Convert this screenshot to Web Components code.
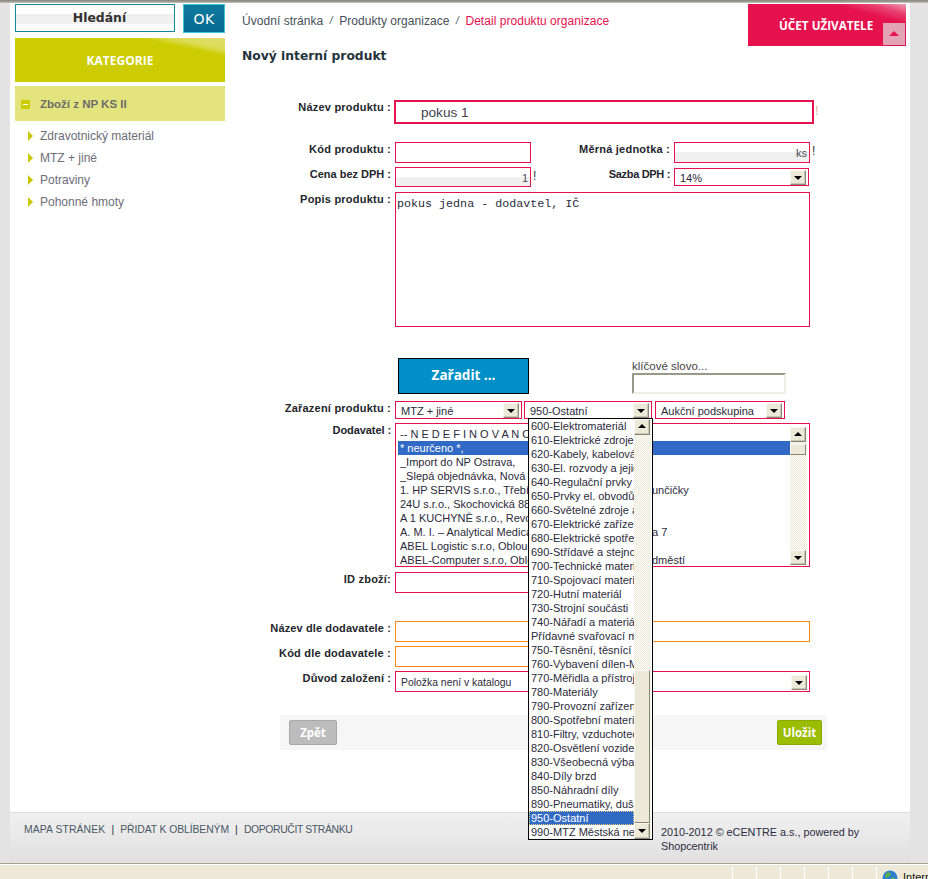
<!DOCTYPE html>
<html lang="cs">
<head>
<meta charset="utf-8">
<title>Nový interní produkt</title>
<style>
    html, body { margin: 0; height: 879px; overflow: hidden; background: #e3e3e3; }
    body { font-family: "Liberation Sans", Arial, sans-serif; }
</style>
</head>
<body>
<app-shell>
    <side-bar slot="side"></side-bar>
    <top-bar slot="main"></top-bar>
    <product-form slot="main"></product-form>
</app-shell>

<script>
// shared look of the old XP scrollbar buttons
const arrowButton = (dir) => `<span class="btn ${dir}"></span>`;
const buttonCss = `
    .btn {
        display: block; box-sizing: border-box; width: 16px; height: 15px; position: relative;
        background: #ece9d8;
        border: 1px solid; border-color: #f7f6ef #8a8778 #8a8778 #f7f6ef;
        box-shadow: inset -1px -1px 0 #c9c6b6;
    }
    .btn::after {
        content: ""; position: absolute; left: 3px; width: 0; height: 0;
        border-left: 4px solid transparent; border-right: 4px solid transparent;
    }
    .btn.down::after { top: 5px; border-top: 4px solid #000; }
    .btn.up::after { top: 4px; border-bottom: 4px solid #000; }
`;
const scrollCss = `
    .bar {
        display: flex; flex-direction: column; width: 17px;
        background: repeating-conic-gradient(#ece9d8 0 25%, #fdfdfb 0 50%) 0 0 / 2px 2px;
    }
    .thumb { box-sizing: border-box; background: #ece9d8; width: 16px; border: 1px solid; border-color: #f7f6ef #8a8778 #8a8778 #f7f6ef; }
    .fill { flex: 1; }
`;

class AppShell extends HTMLElement {
    constructor() {
        super();
        this.attachShadow({ mode: "open" });
        this.shadowRoot.innerHTML = `
            <style>
                :host { display: flex; flex-direction: column; height: 879px; }
                #top { height: 3px; background: linear-gradient(#85857c, #a5a59c 70%, #d8d8d0); }
                #page {
                    display: grid; grid-template-columns: 210px 1fr; column-gap: 17px;
                    height: 809px; box-sizing: border-box;
                    margin: 0 18px 0 10px; padding-left: 5px; background: #fff;
                }
                #main { display: flex; flex-direction: column; min-width: 0; }
            </style>
            <div id="top"></div>
            <div id="page">
                <slot name="side"></slot>
                <div id="main"><slot name="main"></slot></div>
            </div>
            <page-footer></page-footer>
            <status-bar></status-bar>
        `;
    }
}

class SideBar extends HTMLElement {
    constructor() {
        super();
        this.attachShadow({ mode: "open" });
        let items = ["Zdravotnický materiál", "MTZ + jiné", "Potraviny", "Pohonné hmoty"];
        this.shadowRoot.innerHTML = `
            <style>
                :host { display: block; padding-top: 1px; font-family: "Liberation Sans", sans-serif; }
                #search { display: flex; justify-content: space-between; height: 29px; }
                #query {
                    box-sizing: border-box; width: 160px; height: 28px; border: 1px solid #13879f; padding-left: 9px;
                    display: flex; align-items: center; justify-content: center;
                    font: bold 12.4px/1 "DejaVu Sans", sans-serif; color: #33302f;
                    background: linear-gradient(#fff 9px, #f0f0f0 9px, #f0f0f0 19px, #fff 19px);
                }
                #ok {
                    box-sizing: border-box; width: 42px; height: 29px; border: 1px solid #3fc4d8;
                    display: flex; align-items: center; justify-content: center;
                    font: 14px/1 "DejaVu Sans", sans-serif; letter-spacing: .5px; color: #fff;
                    background: linear-gradient(#107a9e, #046a90);
                }
                #cat {
                    margin-top: 5px; height: 44px; padding-top: 2px; box-sizing: border-box; display: flex; align-items: center; justify-content: center;
                    font: bold 12px/1 "Open Sans", sans-serif; color: #fff;
                    background: linear-gradient(to bottom left, #dfdf70 0, #dcdc58 13%, #cccc00 21%);
                }
                #root {
                    margin-top: 4px; height: 35px; background: #e4e47e; display: flex; align-items: center;
                    font-size: 11.5px; font-weight: bold; color: #6c6c6c;
                }
                #minus {
                    width: 9px; height: 9px; margin: 1px 10px 0 6px; background: #cccc00; position: relative;
                }
                #minus::after { content: ""; position: absolute; left: 2px; right: 2px; top: 4px; height: 1px; background: #fff; }
                ul { list-style: none; margin: 4px 0 0; padding: 0; }
                li {
                    display: flex; align-items: center; height: 22px;
                    font-size: 12px; color: #6d6d78;
                }
                li::before {
                    content: ""; width: 0; height: 0; margin: 0 7px 0 13px;
                    border-left: 5px solid #c8c800; border-top: 5px solid transparent; border-bottom: 5px solid transparent;
                }
            </style>
            <div id="search"><div id="query">Hledání</div><div id="ok">OK</div></div>
            <div id="cat">KATEGORIE</div>
            <div id="root"><span id="minus"></span>Zboží z NP KS II</div>
            <ul>${items.map(i => `<li>${i}</li>`).join("")}</ul>
        `;
    }
}

class TopBar extends HTMLElement {
    constructor() {
        super();
        this.attachShadow({ mode: "open" });
        this.shadowRoot.innerHTML = `
            <style>
                :host { display: block; font-family: "Liberation Sans", sans-serif; }
                #row { display: flex; justify-content: space-between; height: 43px; padding-right: 4px; }
                #crumbs { display: flex; padding-top: 11px; font-size: 12px; line-height: 14px; color: #46505a; letter-spacing: .04px; }
                #crumbs i { width: 16px; text-align: center; font-size: 10px; }
                #crumbs b { font-weight: normal; color: #e5124e; }
                #account {
                    position: relative; box-sizing: border-box; width: 158px; height: 42px; margin-top: 1px;
                    padding: 14px 0 0 31px; font: bold 11.7px/14px "Open Sans", sans-serif; color: #fff;
                    background: linear-gradient(to bottom left, #f0a0b8 0, #e8406f 12%, #e5124e 24%);
                }
                #up { position: absolute; right: 1px; bottom: 1px; width: 22px; height: 22px; background: #e3a3b7; }
                #up::after {
                    content: ""; position: absolute; left: 6px; top: 8px; width: 0; height: 0;
                    border-left: 5px solid transparent; border-right: 5px solid transparent; border-bottom: 5px solid #e5124e;
                }
                h1 { margin: 0; padding-top: 2px; font: bold 12.3px/16px "DejaVu Sans", sans-serif; color: #25333c; }
            </style>
            <div id="row">
                <div id="crumbs"><span>Úvodní stránka</span><i>/</i><span>Produkty organizace</span><i>/</i><b>Detail produktu organizace</b></div>
                <div id="account">ÚČET UŽIVATELE<span id="up"></span></div>
            </div>
            <h1>Nový interní produkt</h1>
        `;
    }
}

// one line of the form: right aligned label, then whatever is slotted
class FormRow extends HTMLElement {
    constructor() {
        super();
        this.attachShadow({ mode: "open" });
        this.shadowRoot.innerHTML = `
            <style>
                :host { display: grid; grid-template-columns: 149px 1fr; column-gap: 4px; }
                label {
                    text-align: right; white-space: nowrap;
                    font: bold 11px/14px "Liberation Sans", sans-serif; letter-spacing: var(--ls, .22px); color: #23262c;
                }
                #box { display: flex; min-width: 0; }
            </style>
            <label>${this.getAttribute("label") || ""}</label>
            <div id="box"><slot></slot></div>
        `;
    }
}

class XField extends HTMLElement {
    constructor() {
        super();
        this.attachShadow({ mode: "open" });
        let line = this.getAttribute("tone") == "orange" ? "#f78a14" : "#e5124e";
        let strip = this.getAttribute("strip");
        let bg = strip ? `linear-gradient(#fff ${strip}px, #f0f0f0 ${strip}px)` : "#fff";
        this.shadowRoot.innerHTML = `
            <style>
                :host { display: block; flex: none; box-sizing: border-box; border: 1px solid ${line}; background: ${bg}; overflow: hidden;
                    font: 12px/14px "Liberation Sans", sans-serif; color: #4a4a55; }
                :host([end]) { text-align: right; padding: 3px 2px 0 0; font-size: 11px; }
            </style>
            <slot></slot>
        `;
    }
}

class XSelect extends HTMLElement {
    constructor() {
        super();
        this.attachShadow({ mode: "open" });
        this.shadowRoot.innerHTML = `
            <style>
                :host { display: flex; flex: none; position: relative; box-sizing: border-box; border: 1px solid #e5124e; background: #fff;
                    padding: 2px 2px 0 5px; justify-content: space-between;
                    font: 11px/14px "Liberation Sans", sans-serif; color: #2b2b3a; }
                ${buttonCss}
                .btn { flex: none; margin-top: -1px; }
            </style>
            <span><slot name="text"></slot></span>
            ${arrowButton("down")}
            <slot></slot>
        `;
    }
}

class XListbox extends HTMLElement {
    constructor() {
        super();
        this.attachShadow({ mode: "open" });
        this.shadowRoot.innerHTML = `
            <style>
                :host { display: flex; box-sizing: border-box; width: 415px; height: 144px; border: 1px solid #e5124e; padding: 3px 2px 0 2px; background: #fff; }
                #rows { width: 392px; flex: none; overflow: hidden; }
                ${buttonCss}
                ${scrollCss}
                .bar { height: 138px; }
                .thumb { height: 11px; margin-top: 2px; }
            </style>
            <div id="rows"><slot></slot></div>
            <div class="bar">${arrowButton("up")}<div class="thumb"></div><div class="fill"></div>${arrowButton("down")}</div>
        `;
    }
}

class ListRow extends HTMLElement {
    constructor() {
        super();
        this.attachShadow({ mode: "open" });
        this.shadowRoot.innerHTML = `
            <style>
                :host { display: grid; grid-template-columns: 252px auto; height: 14px; padding-left: 2px; white-space: nowrap;
                    font: 11px/14px "Liberation Sans", sans-serif; color: #2b2b3a; }
                :host([on]) { background: #316ac5; color: #fff; }
                span { overflow: hidden; }
            </style>
            <span>${this.getAttribute("text")}</span><span>${this.getAttribute("rest") || ""}</span>
        `;
    }
}

// the opened list of the second select, lies over the form
class GroupDropdown extends HTMLElement {
    constructor() {
        super();
        this.attachShadow({ mode: "open" });
        let groups = ["600-Elektromateriál", "610-Elektrické zdroje", "620-Kabely, kabelová", "630-El. rozvody a jejich",
            "640-Regulační prvky", "650-Prvky el. obvodů", "660-Světelné zdroje a", "670-Elektrické zařízení",
            "680-Elektrické spotřebiče", "690-Střídavé a stejnosměrné", "700-Technické materiály", "710-Spojovací materiál",
            "720-Hutní materiál", "730-Strojní součásti", "740-Nářadí a materiál", "Přídavné svařovací materiál",
            "750-Těsnění, těsnící prvky", "760-Vybavení dílen-Montáž", "770-Měřidla a přístroje", "780-Materiály",
            "790-Provozní zařízení", "800-Spotřební materiál", "810-Filtry, vzduchotechnika", "820-Osvětlení vozidel",
            "830-Všeobecná výbava", "840-Díly brzd", "850-Náhradní díly", "890-Pneumatiky, duše",
            "950-Ostatní", "990-MTZ Městská nemocnice"];
        this.shadowRoot.innerHTML = `
            <style>
                :host { position: absolute; left: 3px; top: 16px; z-index: 5; display: flex; box-sizing: border-box;
                    width: 125px; height: 422px; border: 1px solid #000; background: #fff; }
                #rows { width: 105px; flex: none; overflow: hidden; }
                #rows div { box-sizing: border-box; height: 14px; padding-left: 2px; white-space: nowrap; overflow: hidden;
                    font: 11px/14px "Liberation Sans", sans-serif; color: #2b2b3a; }
                #rows div.on { background: #316ac5; color: #fff; outline: 1px dotted #e6d27a; outline-offset: -1px; }
                ${buttonCss}
                ${scrollCss}
                .bar { height: 420px; }
                .thumb { height: 153px; }
                .btn.up { height: 16px; }
                .btn.down { height: 16px; }
            </style>
            <div id="rows">${groups.map(g => `<div${g == "950-Ostatní" ? ' class="on"' : ""}>${g}</div>`).join("")}</div>
            <div class="bar">${arrowButton("up")}<div class="fill"></div><div class="thumb"></div>${arrowButton("down")}</div>
        `;
    }
}

class ProductForm extends HTMLElement {
    constructor() {
        super();
        this.attachShadow({ mode: "open" });
        this.shadowRoot.innerHTML = `
            <style>
                :host { display: block; font-family: "Liberation Sans", sans-serif; }
                .mark { width: 0; margin: 0 -2px 0 2px; padding-top: 2px; font: 12px/14px "Liberation Sans", sans-serif; color: #333; }
                .sub { display: grid; grid-template-columns: 139px 1fr; column-gap: 4px; flex: none; }
                .sublabel { text-align: right; white-space: nowrap; font: bold 11px/14px "Liberation Sans", sans-serif; letter-spacing: .22px; color: #23262c; }
                #assign {
                    box-sizing: border-box; width: 131px; height: 36px; margin-left: 3px; border: 1px solid #000;
                    display: flex; align-items: center; justify-content: center;
                    background: #0090c7; color: #fff; font: bold 13.5px/1 "Open Sans", sans-serif;
                }
                #word { margin-left: 103px; font: 11.5px/14px "Liberation Sans", sans-serif; color: #444; padding-top: 1px; }
                #word div {
                    box-sizing: border-box; width: 154px; height: 21px; margin-top: 0; background: #fff;
                    border: 2px solid; border-color: #9a9888 #f0efe4 #f0efe4 #9a9888;
                }
                #actions {
                    display: flex; justify-content: space-between; align-items: center; box-sizing: border-box;
                    width: 547px; height: 35px; margin: 23px 0 0 38px; padding: 0 5px 0 9px; background: #f6f6f6;
                }
                .act { box-sizing: border-box; height: 25px; border-radius: 2px; display: flex; align-items: center; justify-content: center;
                    color: #fff; font: bold 11.5px/1 "Open Sans", sans-serif; }
                #back { width: 48px; background: #bcbcbc; border: 1px solid #a8a8a8; }
                #save { width: 45px; background: #9cbc00; border: 1px solid #8ba800; }
            </style>
            <form-row label="Název produktu :" style="margin-top:36px">
                <x-field style="width:420px;height:24px;margin-left:-1px;border-width:2px;padding:3px 0 0 25px;font-size:13.6px;line-height:16px;color:#3f3f4c">pokus 1</x-field>
                <span style="font:12px/14px 'Liberation Sans';color:#d8b090;padding:4px 0 0 1px">!</span>
            </form-row>

            <form-row label="Kód produktu :" style="margin-top:18px">
                <x-field style="width:136px;height:21px"></x-field>
                <div class="sub">
                    <span class="sublabel">Měrná jednotka :</span>
                    <x-field end strip="9" style="width:136px;height:21px">ks</x-field>
                </div>
                <span class="mark">!</span>
            </form-row>

            <form-row label="Cena bez DPH :" style="margin-top:4px;--ls:0px">
                <x-field end strip="9" style="width:136px;height:20px">1</x-field>
                <span class="mark">!</span>
                <div class="sub">
                    <span class="sublabel" style="letter-spacing:-.33px">Sazba DPH :</span>
                    <x-select style="width:135px;height:18px;margin-top:1px"><span slot="text">14%</span></x-select>
                </div>
            </form-row>

            <form-row label="Popis produktu :" style="margin-top:5px">
                <x-field style="width:415px;height:135px;padding:4px 1px;font:11.7px/14px 'Liberation Mono',monospace;color:#2b2b3a">pokus jedna - dodavtel, IČ</x-field>
            </form-row>

            <form-row style="margin-top:31px">
                <div id="assign">Zařadit ...</div>
                <div id="word">klíčové slovo...<div></div></div>
            </form-row>

            <form-row label="Zařazení produktu :" style="margin-top:7px;position:relative;z-index:5">
                <x-select style="width:127px;height:18px"><span slot="text">MTZ + jiné</span></x-select>
                <x-select style="width:128px;height:18px;margin-left:2px"><span slot="text">950-Ostatní</span><group-dropdown></group-dropdown></x-select>
                <x-select style="width:130px;height:18px;margin-left:3px"><span slot="text">Aukční podskupina</span></x-select>
            </form-row>

            <form-row label="Dodavatel :" style="margin-top:4px;--ls:-.08px">
                <x-listbox>
                    <list-row text="-- N E D E F I N O V A N O --"></list-row>
                    <list-row on text="* neurčeno *,"></list-row>
                    <list-row text="_Import do NP Ostrava,"></list-row>
                    <list-row text="_Slepá objednávka, Nová 5"></list-row>
                    <list-row text="1. HP SERVIS s.r.o., Třebízského" rest="unčičky"></list-row>
                    <list-row text="24U s.r.o., Skochovická 88"></list-row>
                    <list-row text="A 1 KUCHYNĚ s.r.o., Revoluční"></list-row>
                    <list-row text="A. M. I. – Analytical Medical" rest="a 7"></list-row>
                    <list-row text="ABEL Logistic s.r.o, Obloukova"></list-row>
                    <list-row text="ABEL-Computer s.r.o, Obloukova" rest="dměstí"></list-row>
                </x-listbox>
            </form-row>

            <form-row label="ID zboží:" style="margin-top:5px">
                <x-field style="width:205px;height:21px"></x-field>
            </form-row>

            <form-row label="Název dle dodavatele :" style="margin-top:28px;--ls:.12px">
                <x-field tone="orange" style="width:415px;height:21px"></x-field>
            </form-row>

            <form-row label="Kód dle dodavatele :" style="margin-top:4px">
                <x-field tone="orange" style="width:205px;height:21px"></x-field>
            </form-row>

            <form-row label="Důvod založení :" style="margin-top:4px;--ls:.1px">
                <x-select style="width:415px;height:21px;padding-top:4px;font-size:10.4px"><span slot="text">Položka není v katalogu</span></x-select>
            </form-row>

            <div id="actions"><div class="act" id="back">Zpět</div><div class="act" id="save">Uložit</div></div>
        `;
    }
}

class PageFooter extends HTMLElement {
    constructor() {
        super();
        this.attachShadow({ mode: "open" });
        this.shadowRoot.innerHTML = `
            <style>
                :host {
                    display: grid; grid-template-columns: 651px 1fr; box-sizing: border-box; height: 51px; margin: 0 18px 0 10px;
                    padding: 10px 0 0 14px; border-top: 1px solid #dcdcdc; background: linear-gradient(#f0f0f0, #e0e0e0);
                    font-family: "Liberation Sans", sans-serif;
                }
                #links { display: flex; font-size: 10.4px; line-height: 14px; color: #4a5866; }
                #links i { font-style: normal; width: 15px; text-align: center; color: #234; }
                #copy { margin-left: -14px; padding-top: 2px; font-size: 10.8px; line-height: 14px; color: #2c2a3f; }
            </style>
            <div id="links"><span style="letter-spacing:.1px">MAPA STRÁNEK</span><i>|</i><span style="letter-spacing:-.1px">PŘIDAT K OBLÍBENÝM</span><i>|</i><span style="letter-spacing:-.37px">DOPORUČIT STRÁNKU</span></div>
            <div id="copy">2010-2012 © eCENTRE a.s., powered by Shopcentrik</div>
        `;
    }
}

class StatusBar extends HTMLElement {
    constructor() {
        super();
        this.attachShadow({ mode: "open" });
        let cells = [1, 2, 3, 4, 5, 6].map(() => `<span class="cell"></span>`).join("");
        this.shadowRoot.innerHTML = `
            <style>
                :host {
                    display: flex; box-sizing: border-box; height: 16px; background: #ece9d8;
                    border-top: 1px solid #a5a294; box-shadow: inset 0 1px 0 #fff; padding-top: 3px; overflow: hidden;
                    font: 11px/14px "Liberation Sans", sans-serif; color: #111;
                }
                #first { width: 733px; flex: none; border-right: 1px solid #fff; box-sizing: border-box; }
                .cell { width: 24px; flex: none; box-sizing: border-box; border-right: 1px solid #fff; }
                #zone { display: flex; gap: 5px; padding: 3px 0 0 5px; align-items: flex-start; white-space: nowrap; }
                svg { flex: none; }
            </style>
            <span id="first"></span>${cells}
            <div id="zone">
                <svg width="16" height="16" viewBox="0 0 16 16">
                    <circle cx="8" cy="8" r="7.5" fill="#2f7fd0"/>
                    <path d="M3 5 C5 2 8 2 9 4 C8 7 6 6 5 8 C4 8 3 7 3 5 Z M9 8 C11 7 13 8 14 10 C13 12 11 13 10 12 C10 11 9 10 9 8 Z" fill="#5cb04a"/>
                </svg>
                <span>Internet</span>
            </div>
        `;
    }
}

customElements.define("app-shell", AppShell);
customElements.define("side-bar", SideBar);
customElements.define("top-bar", TopBar);
customElements.define("form-row", FormRow);
customElements.define("x-field", XField);
customElements.define("x-select", XSelect);
customElements.define("x-listbox", XListbox);
customElements.define("list-row", ListRow);
customElements.define("group-dropdown", GroupDropdown);
customElements.define("product-form", ProductForm);
customElements.define("page-footer", PageFooter);
customElements.define("status-bar", StatusBar);
</script>
</body>
</html>
